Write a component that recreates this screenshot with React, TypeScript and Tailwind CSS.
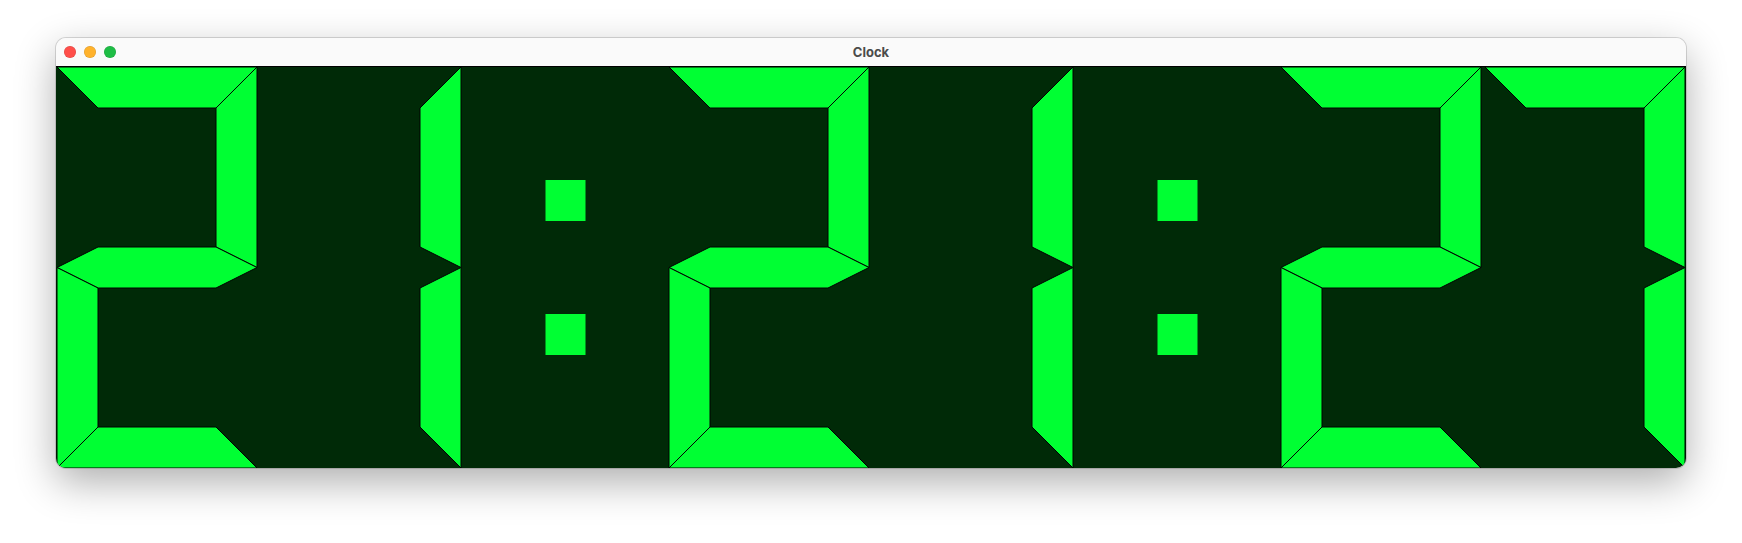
import React from "react";

const ON = "#00ff33";
const BG = "#002a07";

type Seg = "a" | "b" | "c" | "d" | "e" | "f" | "g";

const X0 = 1;
const X1 = 201;
const T = 41;
const H = 401;
const M = 200.5;

const SEG: Record<Seg, [number, number][]> = {
  a: [[X0, 0], [X1, 0], [X1 - T, T], [X0 + T, T]],
  b: [[X1 - T, T], [X1, 0], [X1, M], [X1 - T, M - 20.5]],
  c: [[X1 - T, M + 20.5], [X1, M], [X1, H], [X1 - T, H - T]],
  d: [[X0 + T, H - T], [X1 - T, H - T], [X1, H], [X0, H]],
  e: [[X0, M], [X0 + T, M + 20.5], [X0 + T, H - T], [X0, H]],
  f: [[X0, 0], [X0 + T, T], [X0 + T, M - 20.5], [X0, M]],
  g: [[X0, M], [X0 + T, M - 20.5], [X1 - T, M - 20.5], [X1, M], [X1 - T, M + 20.5], [X0 + T, M + 20.5]],
};

const DIGITS: Record<string, Seg[]> = {
  "0": ["a", "b", "c", "d", "e", "f"],
  "1": ["b", "c"],
  "2": ["a", "b", "g", "e", "d"],
  "3": ["a", "b", "g", "c", "d"],
  "4": ["f", "g", "b", "c"],
  "5": ["a", "f", "g", "c", "d"],
  "6": ["a", "f", "g", "e", "c", "d"],
  "7": ["a", "b", "c"],
  "8": ["a", "b", "c", "d", "e", "f", "g"],
  "9": ["a", "b", "c", "d", "f", "g"],
};

function Digit({ d }: { d: string }) {
  return (
    <svg viewBox="0 0 204 401" width={204} height={401} className="block h-[401px] w-[204px] shrink-0">
      {DIGITS[d].map((s) => (
        <polygon
          key={s}
          points={SEG[s].map((p) => p.join(",")).join(" ")}
          fill={ON}
          stroke="#000"
          strokeWidth={1}
          strokeLinejoin="miter"
        />
      ))}
    </svg>
  );
}

function Colon() {
  return (
    <svg viewBox="0 0 204 401" width={204} height={401} className="block h-[401px] w-[204px] shrink-0">
      <rect x={81.5} y={113} width={40} height={41} fill={ON} />
      <rect x={81.5} y={247} width={40} height={41} fill={ON} />
    </svg>
  );
}

export default function App() {
  const time = "21:21:27";
  return (
    <div className="w-full h-[543px] bg-white pl-[56px] pt-[38px]">
      <div className="w-[1630px] h-[430px] flex flex-col rounded-[10px] overflow-hidden shadow-[0_14px_40px_rgba(0,0,0,0.32),0_0_0_1px_rgba(0,0,0,0.14)]">
        <div className="h-[29px] shrink-0 bg-[#fafafa] border-b border-black relative flex items-center justify-center">
          <div className="absolute left-[8px] top-[8px] flex gap-[8px]">
            <span className="w-[12px] h-[12px] rounded-full bg-[#ff4f4a] shadow-[inset_0_0_0_0.5px_rgba(0,0,0,0.15)]" />
            <span className="w-[12px] h-[12px] rounded-full bg-[#ffb22c] shadow-[inset_0_0_0_0.5px_rgba(0,0,0,0.15)]" />
            <span className="w-[12px] h-[12px] rounded-full bg-[#1ebd45] shadow-[inset_0_0_0_0.5px_rgba(0,0,0,0.15)]" />
          </div>
          <span className="text-[13px] font-bold text-[#4b4b4b] leading-none" style={{ fontFamily: '"Inter", "Liberation Sans", sans-serif' }}>
            Clock
          </span>
        </div>
        <div className="h-[401px] flex overflow-hidden" style={{ backgroundColor: BG }}>
          {time.split("").map((c, i) => (c === ":" ? <Colon key={i} /> : <Digit key={i} d={c} />))}
        </div>
      </div>
    </div>
  );
}
